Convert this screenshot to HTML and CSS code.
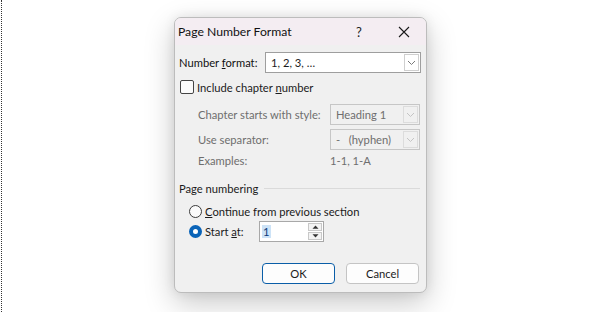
FILE: index.html
```html
<!DOCTYPE html>
<html>
<head>
<meta charset="utf-8">
<link rel="stylesheet" href="styles.css">
</head>
<body>
<div class="page">
  <div class="dots"></div>
  <div class="dialog">
    <div class="titlebar">
      <span class="title">Page Number Format</span>
      <span class="help">?</span>
      <span class="close">
        <svg width="12" height="12" viewBox="0 0 12 12"><path d="M1 1L11 11M11 1L1 11" stroke="#1a1a1a" stroke-width="1.1" fill="none"/></svg>
      </span>
    </div>
    <div class="body">
      <div class="row fmt">
        <span class="lbl">Number <u>f</u>ormat:</span>
        <div class="combo wide">
          <span class="val">1, 2, 3, …</span>
          <span class="arrow"><svg width="9" height="6" viewBox="0 0 9 6"><path d="M1 1L4.5 4.5L8 1" stroke="#7a7a7a" fill="none" stroke-width="1"/></svg></span>
        </div>
      </div>
      <div class="row chk">
        <span class="box"></span>
        <span>Include chapter <u>n</u>umber</span>
      </div>
      <div class="sub">
        <div class="row dis">
          <span class="slbl">Chapter starts with style:</span>
          <div class="combo narrow disabled">
            <span class="val">Heading 1</span>
            <span class="arrow"><svg width="9" height="6" viewBox="0 0 9 6"><path d="M1 1L4.5 4.5L8 1" stroke="#c4c4c4" fill="none" stroke-width="1"/></svg></span>
          </div>
        </div>
        <div class="row dis">
          <span class="slbl">Use separator:</span>
          <div class="combo narrow disabled">
            <span class="val">-&nbsp;&nbsp;&nbsp;(hyphen)</span>
            <span class="arrow"><svg width="9" height="6" viewBox="0 0 9 6"><path d="M1 1L4.5 4.5L8 1" stroke="#c4c4c4" fill="none" stroke-width="1"/></svg></span>
          </div>
        </div>
        <div class="row dis ex">
          <span class="slbl">Examples:</span>
          <span class="exv">1-1, 1-A</span>
        </div>
      </div>
      <div class="group">
        <span>Page numbering</span>
        <span class="line"></span>
      </div>
      <div class="row radio r1">
        <span class="rb"></span>
        <span><u>C</u>ontinue from previous section</span>
      </div>
      <div class="row radio r2">
        <span class="rb on"></span>
        <span class="startlbl">Start <u>a</u>t:</span>
        <div class="spin">
          <span class="sval"><span class="sel">1</span></span>
          <span class="btns">
            <span class="sb"><svg width="7" height="4" viewBox="0 0 7 4"><path d="M0.5 3.8L3.5 0.5L6.5 3.8Z" fill="#333"/></svg></span>
            <span class="sb"><svg width="7" height="4" viewBox="0 0 7 4"><path d="M0.5 0.2L3.5 3.5L6.5 0.2Z" fill="#333"/></svg></span>
          </span>
        </div>
      </div>
      <div class="buttons">
        <span class="btn def">OK</span>
        <span class="btn">Cancel</span>
      </div>
    </div>
  </div>
</div>
</body>
</html>
```

FILE: styles.css
```css
html, body {
  margin: 0;
  padding: 0;
  background: #ffffff;
}
.page {
  position: relative;
  width: 615px;
  height: 312px;
  overflow: hidden;
  font-family: "Lato", "Noto Sans", sans-serif;
  font-size: 11.2px;
  color: #1b1b1b;
  white-space: nowrap;
}
.dots {
  position: absolute;
  left: 1px;
  top: 0;
  width: 0;
  height: 312px;
  border-left: 1px dotted #333;
}
.dialog {
  position: absolute;
  left: 174px;
  top: 17px;
  width: 251px;
  height: 274px;
  background: #f0f0f0;
  border: 1px solid #bcbcbc;
  border-radius: 7px;
  box-shadow: 0 10px 30px rgba(0,0,0,0.22), 0 0 12px rgba(0,0,0,0.08);
  overflow: hidden;
}
.titlebar {
  height: 27px;
  background: #f4edf2;
  display: flex;
  align-items: center;
  padding-left: 3px;
}
.title {
  font-size: 12.2px;
  color: #111;
  flex: 1;
}
.help {
  font-size: 13px;
  width: 14px;
  margin-right: 28px;
  color: #222;
}
.close {
  display: flex;
  width: 12px;
  margin-right: 16px;
}
.body {
  padding: 7px 6px 0 4px;
}
.row {
  display: flex;
  align-items: center;
}
.row > * {
  flex-shrink: 0;
}
.fmt {
  height: 21px;
}
.fmt .lbl {
  width: 86px;
  color: #111;
}
.combo {
  height: 19px;
  border: 1px solid #9e9e9e;
  background: #fff;
  display: flex;
  align-items: center;
}
.combo.wide {
  width: 154px;
}
.combo .val {
  flex: 1;
  padding-left: 5px;
}
.combo .arrow {
  width: 15px;
  height: 17px;
  margin-right: 1px;
  border: 1px solid #cfcfcf;
  box-sizing: border-box;
  display: flex;
  align-items: center;
  justify-content: center;
}
.chk {
  margin-top: 6px;
  height: 16px;
  padding-left: 1px;
}
.box {
  width: 12px;
  height: 12px;
  border: 1px solid #444;
  border-radius: 2px;
  background: #fbfbfb;
  margin-right: 3px;
}
.sub {
  padding-left: 19px;
  margin-top: 9px;
}
.sub .row {
  height: 21px;
  margin-bottom: 4px;
}
.dis {
  color: #6e6e6e;
}
.slbl {
  width: 132px;
}
.combo.narrow {
  width: 88px;
}
.combo.disabled {
  border-color: #c6c6c6;
  background: #f0f0f0;
  color: #6e6e6e;
}
.combo.disabled .arrow {
  border-color: #dcdcdc;
}
.sub .ex {
  height: 15px;
  margin-top: -1px;
}
.group {
  margin-top: 13px;
  display: flex;
  align-items: center;
  height: 15px;
}
.line {
  flex: 1;
  height: 1px;
  background: #dadada;
  margin-left: 6px;
}
.radio {
  padding-left: 10px;
}
.r1 {
  margin-top: 8px;
  height: 15px;
}
.r2 {
  margin-top: 2px;
  height: 21px;
}
.rb {
  width: 11px;
  height: 11px;
  border: 1px solid #3b3b3b;
  border-radius: 50%;
  margin-right: 3px;
  background: #fbfbfb;
}
.rb.on {
  border: 4px solid #0a64b8;
  width: 5px;
  height: 5px;
  background: #fff;
}
.startlbl {
  width: 54px;
}
.spin {
  width: 63px;
  height: 19px;
  border: 1px solid #a8a8a8;
  background: #fff;
  display: flex;
  align-items: center;
}
.sval {
  flex: 1;
  padding-left: 2px;
}
.sel {
  background: #cde3f7;
  color: #0b3a78;
  padding: 0 1px;
}
.btns {
  display: flex;
  flex-direction: column;
  width: 14px;
  height: 17px;
  margin-right: 1px;
  gap: 1px;
}
.sb {
  flex: 1;
  border: 1px solid #c8c8c8;
  background: #f3f3f3;
  display: flex;
  align-items: center;
  justify-content: center;
}
.buttons {
  margin-top: 21px;
  display: flex;
  justify-content: flex-end;
  gap: 11px;
  padding-right: 1px;
}
.btn {
  width: 71px;
  height: 19px;
  border: 1px solid #c4c4c4;
  border-radius: 4px;
  background: #fdfdfd;
  display: flex;
  align-items: center;
  justify-content: center;
  color: #1b1b1b;
}
.btn.def {
  border-color: #0a5ea8;
}
```
